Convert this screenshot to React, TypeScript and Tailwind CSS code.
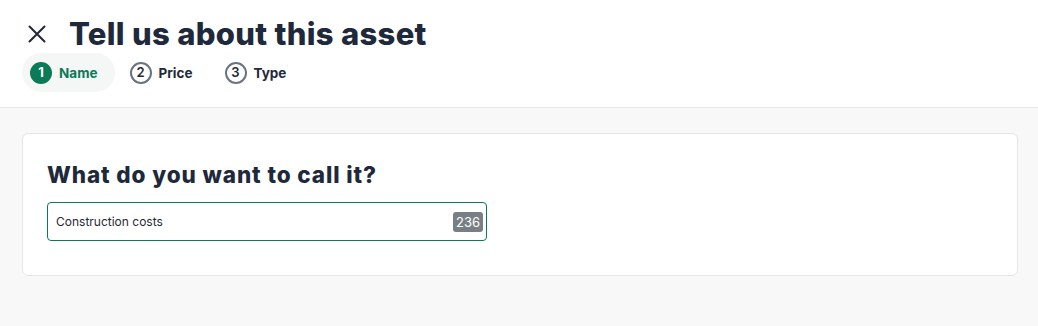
const font = { fontFamily: "Inter, 'Noto Sans', sans-serif" };

type Step = { n: number; label: string; active?: boolean };

const steps: Step[] = [
  { n: 1, label: "Name", active: true },
  { n: 2, label: "Price" },
  { n: 3, label: "Type" },
];

function StepPill({ step }: { step: Step }) {
  return (
    <div
      className={
        step.active
          ? "flex h-[39px] items-center gap-[7px] rounded-full bg-[#f5f7f6] pl-[8px] pr-[17px]"
          : "flex h-[39px] items-center gap-[7px] rounded-full pl-[8px] pr-[17px]"
      }
    >
      {step.active ? (
        <span className="flex h-[22px] w-[22px] items-center justify-center rounded-full bg-[#0b7a57] text-[13px] font-bold text-white">
          {step.n}
        </span>
      ) : (
        <span className="flex h-[22px] w-[22px] items-center justify-center rounded-full border-2 border-[#6b7280] text-[13px] font-semibold text-[#1f2937]">
          {step.n}
        </span>
      )}
      <span
        className={
          step.active
            ? "text-[13.5px] font-bold leading-[20px] text-[#0b7a57]"
            : "text-[13.5px] font-bold leading-[20px] text-[#1f2937]"
        }
      >
        {step.label}
      </span>
    </div>
  );
}

export default function App() {
  return (
    <div className="h-[326px] w-[1038px] overflow-hidden bg-[#f7f8f7]" style={font}>
      {/* header */}
      <div className="border-b border-[#e6e8e7] bg-white pb-[15px] pl-[22px] pr-[20px] pt-[14px]">
        <div className="flex items-center gap-[23px] pl-[6px]">
          <svg width="18" height="18" viewBox="0 0 18 18" className="text-[#1f2937]">
            <path d="M1.5 1.5 L16.5 16.5 M16.5 1.5 L1.5 16.5" stroke="currentColor" strokeWidth="2" strokeLinecap="round" />
          </svg>
          <h1 className="text-[31px] font-extrabold leading-[40px] tracking-[0.3px] text-[#1e293b]">
            Tell us about this asset
          </h1>
        </div>
        <div className="-mt-[1px] flex items-center gap-[7px]">
          {steps.map((s) => (
            <StepPill key={s.n} step={s} />
          ))}
        </div>
      </div>

      {/* body */}
      <div className="pl-[22px] pr-[20px] pt-[25px]">
        <div className="rounded-[6px] border border-[#e5e7e6] bg-white px-[24px] pb-[34px] pt-[27px]">
          <h2 className="text-[22.5px] font-extrabold leading-[28px] tracking-[0.9px] text-[#1e293b]">
            What do you want to call it?
          </h2>
          <div className="mt-[13px] flex h-[39px] w-[440px] items-center rounded-[4px] border border-[#0b7a57] pl-[8px] pr-[3px]">
            <span className="flex-1 text-[12px] text-[#1f2937]">Construction costs</span>
            <span className="rounded-[3px] bg-[#7a7f86] px-[3px] py-[1px] text-[13px] leading-[18px] text-white">
              236
            </span>
          </div>
        </div>
      </div>
    </div>
  );
}
